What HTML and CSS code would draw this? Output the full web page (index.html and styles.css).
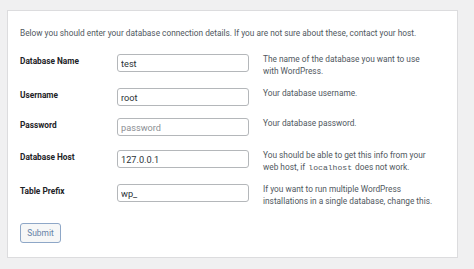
FILE: index.html
```html
<!DOCTYPE html>
<html>
<head>
    <title>Database setup</title>
    <link rel="stylesheet" href="styles.css">
</head>
<body>
<div class="card">
    <p class="intro">Below you should enter your database connection details. If you are not sure about these, contact your host.</p>
    <div class="form">
        <label class="lbl" for="dbname">Database Name</label>
        <input class="field" type="text" id="dbname" value="test">
        <div class="desc">The name of the database you want to use with WordPress.</div>

        <label class="lbl" for="uname">Username</label>
        <input class="field" type="text" id="uname" value="root">
        <div class="desc">Your database username.</div>

        <label class="lbl" for="pwd">Password</label>
        <input class="field" type="text" id="pwd" placeholder="password">
        <div class="desc">Your database password.</div>

        <label class="lbl" for="dbhost">Database Host</label>
        <input class="field" type="text" id="dbhost" value="127.0.0.1">
        <div class="desc">You should be able to get this info from your web host, if <code>localhost</code> does not work.</div>

        <label class="lbl" for="prefix">Table Prefix</label>
        <input class="field" type="text" id="prefix" value="wp_">
        <div class="desc">If you want to run multiple WordPress installations in a single database, change this.</div>
    </div>
    <button class="submit">Submit</button>
</div>
</body>
</html>
```

FILE: styles.css
```css
body{
    margin: 0;
    padding: 10px 16px 11px 7px;
    background-color: #f0f0f1;
    font-family: Roboto, "Open Sans", sans-serif;
    color: #3c434a;
}
.card{
    background-color: #fff;
    border: 1px solid #dcdcde;
    padding: 16px 12px 14px 12px;
}
.intro{
    margin: 0 0 15px 0;
    font-size: 8.3px;
    line-height: 12px;
    color: #50575e;
}
.form{
    display: grid;
    grid-template-columns: 97px 132px 1fr;
    grid-template-rows: 34px 30px 32px 34px 24px;
}
.lbl{
    padding-top: 1px;
    font-size: 8.3px;
    line-height: 12px;
    font-weight: bold;
    color: #1d2327;
}
.field{
    box-sizing: border-box;
    width: 132px;
    height: 18px;
    margin: 0;
    padding: 0 3px;
    border: 1px solid #b4b7ba;
    border-radius: 3px;
    font-family: inherit;
    font-size: 9.2px;
    color: #2c3338;
}
.field::placeholder{
    color: #8c8f94;
}
.desc{
    max-width: 174px;
    padding-left: 14px;
    font-size: 8.3px;
    line-height: 11.5px;
    color: #50575e;
}
.desc code{
    margin: 0 1px;
    font-family: "Liberation Mono", monospace;
    font-size: 8.1px;
    line-height: 1;
}
.submit{
    margin-top: 15px;
    width: 41px;
    height: 20px;
    padding: 0;
    border: 1px solid #8ea7c7;
    border-radius: 3px;
    background-color: #f6f7f7;
    font-family: inherit;
    font-size: 8.4px;
    color: #6581a6;
}
```
